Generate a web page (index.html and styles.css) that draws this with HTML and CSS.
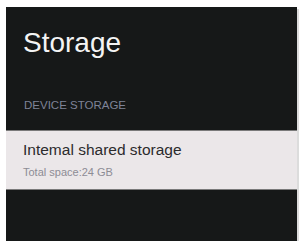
FILE: index.html
```html
<!DOCTYPE html>
<html>
<head>
<meta charset="utf-8">
<link rel="stylesheet" href="styles.css">
</head>
<body>
<div class="panel">
  <h1 class="title">Storage</h1>
  <div class="section">DEVICE STORAGE</div>
  <div class="row">
    <div class="row-title">Intemal shared storage</div>
    <div class="row-sub">Total space:24 GB</div>
  </div>
</div>
</body>
</html>
```
FILE: styles.css
```css
html, body {
  margin: 0;
  padding: 0;
  background: #ffffff;
}
body {
  padding: 7px 0 0 6px;
  font-family: "Liberation Sans", Arial, sans-serif;
}
.panel {
  width: 291px;
  height: 234px;
  background: #161818;
  box-shadow: 2px 2px 0 #dcdcdc;
  display: flex;
  flex-direction: column;
}
.title {
  margin: 20px 0 0 17px;
  font-size: 28px;
  line-height: 32px;
  font-weight: normal;
  color: #f4f4f4;
}
.section {
  margin: 39px 0 0 18px;
  font-size: 11.5px;
  line-height: 14px;
  color: #7e8397;
}
.row {
  margin-top: 18px;
  height: 48px;
  background: #ebe7e9;
  border-top: 1px solid #7a7a7a;
  border-bottom: 1px solid #7a7a7a;
  padding: 10px 0 0 17px;
  box-sizing: content-box;
}
.row-title {
  font-size: 15.5px;
  line-height: 18px;
  color: #2b2b2d;
}
.row-sub {
  margin-top: 6px;
  font-size: 11px;
  line-height: 14px;
  color: #8d8c95;
}
```
